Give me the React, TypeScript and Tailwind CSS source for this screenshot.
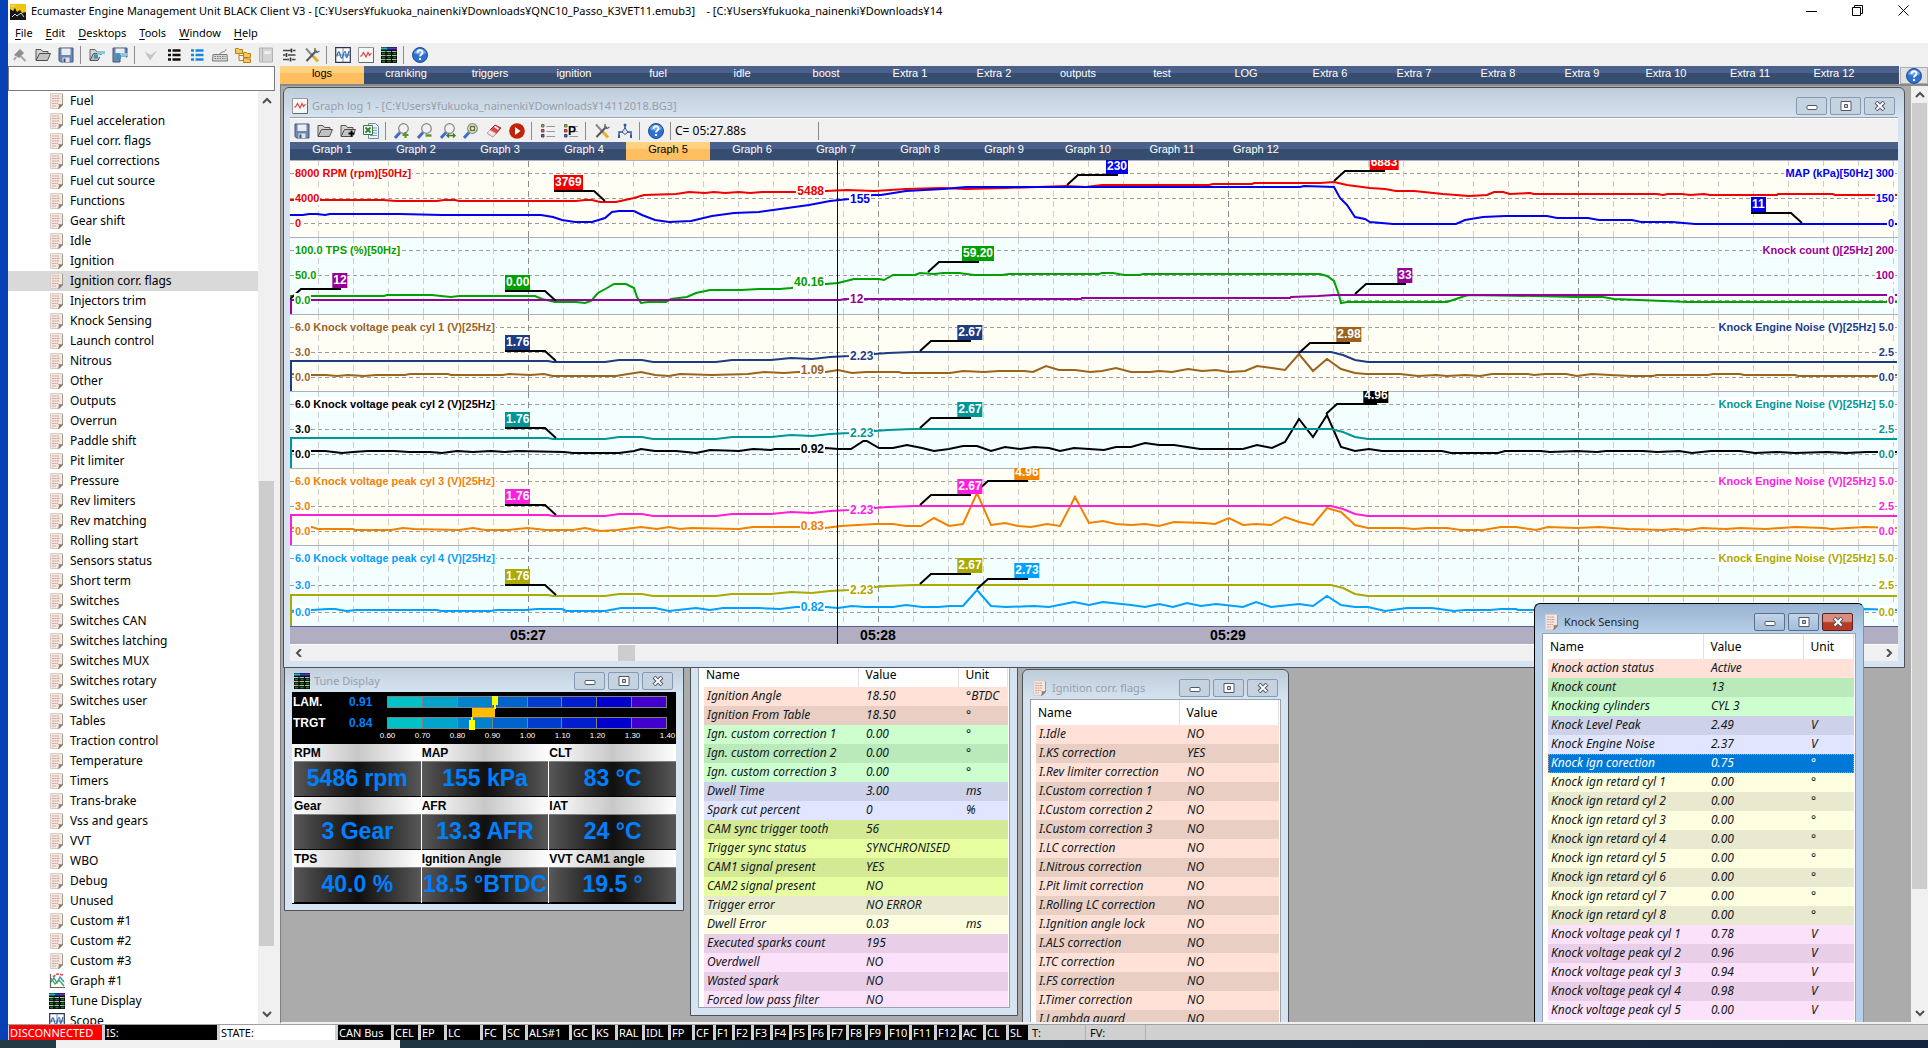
import type { ReactNode } from 'react';
import clsx from 'clsx';

const uiFont = "font-['Noto_Sans','Open_Sans',sans-serif]";
const arial = "font-['Liberation_Sans',Arial,sans-serif]";

/* ---------- icons ---------- */

function Icon({ children }: { children: ReactNode }) {
  return (
    <svg width="16" height="16" viewBox="0 0 16 16" fill="none" aria-hidden="true" className="block shrink-0">
      {children}
    </svg>
  );
}

const PageIcon = () => (
  <Icon>
    <path d="M1.500 0.500h12v11l-4 4h-8z" fill="#efe9e2" stroke="#d5cec6" />
    <path d="M13.500 1v10.500l-4 4" stroke="#a89c90" />
    <path d="M8.500 15.500c1.500-1 1.500-2.500 1-4.500 1.500.5 3 .5 4.500-.5v1.500l-3.500 3.500z" fill="#8f7e6f" />
    <path d="M3 3h7M3 5.500h8M3 8h7M3 10.500h6M3 13h4" stroke="#e39a94" strokeDasharray="2 0.500" />
  </Icon>
);

const SaveIcon = () => (
  <Icon>
    <path d="M1 1h14v14H2.500L1 13.500z" fill="#6d87b0" stroke="#44597c" />
    <path d="M3.500 1.500h9v6.500h-9z" fill="#e9edf3" />
    <path d="M4.500 10.500h7V15h-7z" fill="#dfe5ee" />
    <path d="M5.500 11.500h2V15h-2z" fill="#3d4f6d" />
  </Icon>
);

const FolderIcon = () => (
  <Icon>
    <path d="M1 13V2.500h5l1.500 2H13V7" fill="#d4d4d4" stroke="#555" />
    <path d="M1 13.500L4.500 6.500H15.500L12.500 13.500z" fill="#c2c2c2" stroke="#4d4d4d" />
  </Icon>
);

const FolderAddIcon = () => (
  <Icon>
    <path d="M1 13V2.500h5l1.500 2H13V7" fill="#d4d4d4" stroke="#555" />
    <path d="M1 13.500L4.500 6.500H15.500L12.500 13.500z" fill="#c2c2c2" stroke="#4d4d4d" />
    <path d="M11.500 7.500v6M8.500 10.500h6" stroke="#000" strokeWidth="1.800" />
  </Icon>
);

const DesktopOpenIcon = () => (
  <Icon>
    <path d="M1 13V2.500h5l1.500 2H13V7" fill="#d4d4d4" stroke="#666" />
    <path d="M1 13.500L4.500 6.500h8L9 13.500z" fill="#bbb" stroke="#555" />
    <path d="M8 4h8v3H8z" fill="#8cc7dc" />
    <path d="M5 7.500h4v4H5z" fill="#3b93b5" />
    <path d="M9 9h4" stroke="#dff1f7" strokeWidth="2" />
  </Icon>
);

const DesktopSaveIcon = () => (
  <Icon>
    <path d="M1 1h14v9H8v5H1z" fill="#6d87b0" stroke="#44597c" />
    <path d="M3.500 1.500h9V6h-9z" fill="#e9edf3" />
    <path d="M8 6h8v3H8z" fill="#8cc7dc" />
    <path d="M4 8h5v4H4z" fill="#3b93b5" />
    <path d="M9 10.500h5" stroke="#dff1f7" strokeWidth="2" />
  </Icon>
);

const PlugIcon = () => (
  <Icon>
    <path d="M2 8L8 2l4 4-5 5z" fill="#8f8f8f" />
    <path d="M8.500 9l5 5M4 10l-2 3" stroke="#a5a5a5" strokeWidth="2" />
  </Icon>
);

const CheckIcon = () => (
  <Icon>
    <path d="M1.500 4.500L7 13.500 14.500 3 8 8z" fill="#c4c4c4" />
  </Icon>
);

function ListIcon({ color }: { color: string }) {
  return (
    <Icon>
      <path d="M2 3.500h3M6.500 3.500H14.500M2 8h3M6.500 8H14.500M2 12.500h3M6.500 12.500H14.500" stroke={color} strokeWidth="2.400" />
    </Icon>
  );
}

const KeyboardIcon = () => (
  <Icon>
    <path d="M8 7c0-3 6-1 6-5" stroke="#888" />
    <path d="M1 7.500h14l.5 6.500H.5z" fill="#d8d8d8" stroke="#7a7a7a" />
    <path d="M2.500 9.500h11M2.500 11.500h11" stroke="#777" strokeDasharray="1.500 1" />
  </Icon>
);

const FoldersIcon = () => (
  <Icon>
    <path d="M.5 1.500h3l1 1h3v4h-7zM8.500 5.500h3l1 1h3v4h-7zM8.500 11h3l1 1h3v3.500h-7z" fill="#f9c65c" stroke="#b9811b" />
    <path d="M4 7v6.500h4.500M4 8.500h4.500" stroke="#b9811b" />
  </Icon>
);

const BookIcon = () => (
  <Icon>
    <path d="M1.500 1h13v14h-13z" fill="#d5d5d5" stroke="#b3b3b3" />
    <path d="M4.500 1v14" stroke="#b3b3b3" />
    <path d="M6.500 4h6v3h-6z" fill="#efefef" />
  </Icon>
);

const SlidersIcon = () => (
  <Icon>
    <path d="M2 3.500h8M12 3.500h2.500M2 8h2.500M7 8h7.500M2 12.500h6M11 12.500h3.500" stroke="#444" strokeWidth="1.600" />
    <path d="M10.500 1.500v4M5.500 6v4M9.500 10.500v4" stroke="#333" strokeWidth="1.600" />
  </Icon>
);

const ToolsIcon = () => (
  <Icon>
    <path d="M2 1.500l8 9" stroke="#8a8a8a" strokeWidth="2" />
    <path d="M9.500 9.500l4.500 5" stroke="#e8b028" strokeWidth="3" />
    <path d="M12.500 3.500L2.500 14" stroke="#555" strokeWidth="2" />
    <path d="M11 1v3.500l2 1L15.500 4" stroke="#666" strokeWidth="1.400" />
  </Icon>
);

const ScopeIcon = () => (
  <Icon>
    <path d="M.7.7h14.600v14.600H.7z" fill="#fff" stroke="#2b3350" strokeWidth="1.200" />
    <path d="M8 1v14M1 8h14" stroke="#7683a6" />
    <path d="M2 9.500c1-6 2.500-6 3.200-1.500.8 4 1.800 4 2.800 1 1.500-6 3-6 3 0 .5 3 1.500 1 3-5" stroke="#2a6db8" strokeWidth="1.200" />
  </Icon>
);

const GraphIcon = () => (
  <Icon>
    <path d="M.5.5h15v15H.5z" fill="#f7f7f7" stroke="#9a9a9a" />
    <path d="M15.500 1v14.500H1" stroke="#666" />
    <path d="M2 9h1.500L5.500 5.500 8 10l2-4.500 1.500 3L13.500 6" stroke="#e0474a" strokeWidth="1.200" />
  </Icon>
);

const TuneIcon = () => (
  <Icon>
    <path d="M0 0h16v16H0z" fill="#0a0f0a" />
    <path d="M0 1.500h6" stroke="#22b6c4" strokeWidth="2" />
    <path d="M6 1.500h5" stroke="#2148d8" strokeWidth="2" />
    <path d="M11 1.500h5" stroke="#6e2bc0" strokeWidth="2" />
    <path d="M0 4.500h16M0 8.500h16M0 12.500h16" stroke="#b4bcb4" strokeDasharray="4.500 1" />
    <path d="M1 6.500h14M1 10.500h14M1 14.500h14" stroke="#1d7a2d" strokeWidth="1.500" strokeDasharray="3 2.500" />
  </Icon>
);

const ChartIcon = () => (
  <Icon>
    <path d="M1.500 1v13.500H16" stroke="#666" strokeWidth="1.200" />
    <path d="M2 9l3-4 3 5 3-6 4 5" stroke="#2f8ed0" strokeWidth="1.300" />
    <path d="M2 5l4 6 4-4 5 6" stroke="#3faa3f" strokeWidth="1.300" />
    <path d="M4 4l4-3 7 1" stroke="#e0474a" strokeWidth="1.600" strokeDasharray="3 1" />
  </Icon>
);

const HelpIcon = () => (
  <Icon>
    <circle cx="8" cy="8" r="7.500" fill="#2f71cc" stroke="#1f4f9c" />
    <path d="M2 6a6.500 6.500 0 0112 0C11 8 5 8 2 6z" fill="#6ea4ea" />
    <path d="M5.500 6c0-3.500 5-3.500 5-.5 0 2-2.500 2-2.500 4M8 11v2" stroke="#fff" strokeWidth="1.900" />
  </Icon>
);

const ExcelIcon = () => (
  <Icon>
    <path d="M5.500.5h7l3 3v12h-10z" fill="#eef3fb" stroke="#6f8cb8" />
    <path d="M10 5h4M10 7.500h4M10 10h4M7 12.500h7" stroke="#7e9bc9" />
    <path d="M.5 2.500h9v9h-9z" fill="#f3faf0" stroke="#2d7f33" />
    <path d="M2.500 4.500l5 5M7.500 4.500l-5 5" stroke="#2d7f33" strokeWidth="1.800" />
  </Icon>
);

function ZoomIcon({ children }: { children: ReactNode }) {
  return (
    <Icon>
      <path d="M1 15l5-5.500" stroke="#3f6fc4" strokeWidth="3" />
      <circle cx="9.500" cy="5.500" r="4.800" fill="#f1f1f1" stroke="#858585" strokeWidth="1.200" />
      {children}
    </Icon>
  );
}

const EraserIcon = () => (
  <Icon>
    <path d="M1 10l8-8 6 3-8 9z" fill="#e04848" stroke="#a02d2d" />
    <path d="M1 10l3-3 6 3.500L7 14z" fill="#f2e7e7" stroke="#c9a8a8" />
    <path d="M8.500 3.500l4 2.500" stroke="#fff" strokeWidth="1.500" />
  </Icon>
);

const PlayIcon = () => (
  <Icon>
    <circle cx="8" cy="8" r="7.800" fill="#c22408" />
    <path d="M6 4l5.500 4L6 12z" fill="#fff" />
  </Icon>
);

function LegendIcon({ letter }: { letter?: string }) {
  return (
    <Icon>
      <path d="M6.500 3.500H15M6.500 8.500H15M6.500 13.500H15" stroke="#999" />
      <path d="M1.500 1.500h2.500v2.500h-2.500z" fill="#8ba86c" stroke="#5b7a3b" />
      <path d="M1.500 6.500h2.500v2.500h-2.500z" fill="#d06868" stroke="#9b3333" />
      <path d="M1.500 11.500h2.500v2.500h-2.500z" fill="#5b6fb5" stroke="#33437f" />
      {letter && (
        <text x="5" y="12" fontSize="12" fontWeight="700" fill="#000" fontFamily="Liberation Sans">
          {letter}
        </text>
      )}
    </Icon>
  );
}

const NodesIcon = () => (
  <Icon>
    <path d="M8 2v5M2 13V9h12v4" stroke="#35569a" strokeWidth="1.500" />
    <path d="M8 5l3 4-3 2.500L5 9z" fill="#dfe7f5" stroke="#35569a" />
    <path d="M1 12h2v3H1zM13 12h2v3h-2z" fill="#35569a" />
    <circle cx="8" cy="2" r="1.500" fill="#35569a" />
  </Icon>
);

const AppIcon = () => (
  <Icon>
    <path d="M0 0h16v16H0z" fill="#f2c412" />
    <path d="M0 16V5l3 2 2-3 2 4 3-2 2 3 4-1v8z" fill="#171717" />
    <path d="M2 13l3-3 2 2 4-3 3 4M1 2h4" stroke="#ddd" />
  </Icon>
);

function ToolButton({ label, children }: { label: string; children: ReactNode }) {
  return (
    <button type="button" aria-label={label} className="flex h-[22px] w-[23px] items-center justify-center">
      {children}
    </button>
  );
}

const Divider = () => <span className="mr-[4px] ml-[3px] h-[18px] w-px shrink-0 bg-[#8c8c8c]" />;

/* ---------- windows ---------- */

function WindowButtons({ active = false }: { active?: boolean }) {
  const base = 'flex h-[18px] w-[31px] items-center justify-center rounded-xs border';
  const idle = active
    ? 'border-[#57708f] bg-linear-to-b from-[#c3d4e8] to-[#a3bcd9]'
    : 'border-[#8798b3] bg-[#c5d2e0]';
  return (
    <div className="flex gap-[3px]">
      <button type="button" aria-label="Minimize" className={clsx(base, idle)}>
        <svg width="12" height="10" viewBox="0 0 12 10" aria-hidden="true">
          <rect x="1" y="4.500" width="10" height="4" rx="1" fill="#fff" stroke="#50586a" />
        </svg>
      </button>
      <button type="button" aria-label="Restore" className={clsx(base, idle)}>
        <svg width="12" height="10" viewBox="0 0 12 10" aria-hidden="true">
          <path d="M1 .5h10v9H1zM4.500 3.500v3h3v-3z" fill="#fff" fillRule="evenodd" stroke="#50586a" />
        </svg>
      </button>
      <button
        type="button"
        aria-label="Close"
        className={clsx(base, active ? 'border-[#5f1f1a] bg-linear-to-b from-[#d98b7f] from-45% to-[#b93a26] to-55%' : idle)}
      >
        <svg width="12" height="10" viewBox="0 0 12 10" aria-hidden="true">
          <path d="M2 1l8 8M10 1l-8 8" stroke="#50586a" strokeWidth="4" />
          <path d="M2.500 1.500l7 7M9.500 1.500l-7 7" stroke="#fff" strokeWidth="2" />
        </svg>
      </button>
    </div>
  );
}

interface ChildWindowProps {
  title?: string;
  icon?: ReactNode;
  active?: boolean;
  className: string;
  children: ReactNode;
}

function ChildWindow({ title, icon, active = false, className, children }: ChildWindowProps) {
  return (
    <section
      className={clsx(
        'absolute flex flex-col rounded-t-md border px-[6px] pb-[6px]',
        active
          ? 'border-black border-r-[#2ab4d8] bg-[#b9d1ea] bg-linear-to-b from-[#98b3d1] to-[#b9d1ea] to-[30px]'
          : 'border-[#4d5258] bg-[#d6e3f1] bg-linear-to-b from-[#bfccda] to-[#d6e3f1] to-[30px]',
        className,
      )}
    >
      <header className="flex h-[29px] shrink-0 items-center gap-1 pt-[6px] pr-[3px] pl-[2px]">
        {icon}
        <h2 className={clsx('flex-1 truncate text-[11px] leading-4', active ? 'text-[#1c2733]' : 'text-[#98a0a9]')}>
          {title}
        </h2>
        <WindowButtons active={active} />
      </header>
      {children}
    </section>
  );
}

/* ---------- data tables ---------- */

const tones: Record<string, string[]> = {
  peach: ['bg-[#ffe1d7]', 'bg-[#e9cec4]'],
  green: ['bg-[#ccffcd]', 'bg-[#bae9ba]'],
  blue: ['bg-[#e1e5ff]', 'bg-[#ced2e9]'],
  lime: ['bg-[#e8ffa1]', 'bg-[#d4e993]'],
  yellow: ['bg-[#feffe1]', 'bg-[#e8e9ce]'],
  pink: ['bg-[#fce1fb]', 'bg-[#e8cee6]'],
};

type Row = [tone: string, name: string, value: string, unit?: string];

const ignitionRows: Row[] = [
  ['peach', 'Ignition Angle', '18.50', '°BTDC'],
  ['peach', 'Ignition From Table', '18.50', '°'],
  ['green', 'Ign. custom correction 1', '0.00', '°'],
  ['green', 'Ign. custom correction 2', '0.00', '°'],
  ['green', 'Ign. custom correction 3', '0.00', '°'],
  ['blue', 'Dwell Time', '3.00', 'ms'],
  ['blue', 'Spark cut percent', '0', '%'],
  ['lime', 'CAM sync trigger tooth', '56'],
  ['lime', 'Trigger sync status', 'SYNCHRONISED'],
  ['lime', 'CAM1 signal present', 'YES'],
  ['lime', 'CAM2 signal present', 'NO'],
  ['yellow', 'Trigger error', 'NO ERROR'],
  ['yellow', 'Dwell Error', '0.03', 'ms'],
  ['pink', 'Executed sparks count', '195'],
  ['pink', 'Overdwell', 'NO'],
  ['pink', 'Wasted spark', 'NO'],
  ['pink', 'Forced low pass filter', 'NO'],
];

const flagRows: Row[] = [
  'Idle', 'KS correction', 'Rev limiter correction', 'Custom correction 1', 'Custom correction 2',
  'Custom correction 3', 'LC correction', 'Nitrous correction', 'Pit limit correction',
  'Rolling LC correction', 'Ignition angle lock', 'ALS correction', 'TC correction', 'FS correction',
  'Timer correction', 'Lambda guard',
].map((name) => ['peach', `I.${name}`, name === 'KS correction' ? 'YES' : 'NO']);

const knockRows: Row[] = [
  ['peach', 'Knock action status', 'Active'],
  ['green', 'Knock count', '13'],
  ['green', 'Knocking cylinders', 'CYL 3'],
  ['blue', 'Knock Level Peak', '2.49', 'V'],
  ['blue', 'Knock Engine Noise', '2.37', 'V'],
  ['selected', 'Knock ign corection', '0.75', '°'],
  ...[1, 2, 3, 4, 5, 6, 7, 8].map((n): Row => ['yellow', `Knock ign retard cyl ${n}`, '0.00', '°']),
  ...['0.78', '0.96', '0.94', '0.98', '0.00'].map(
    (v, i): Row => ['pink', `Knock voltage peak cyl ${i + 1}`, v, 'V'],
  ),
];

function DataTable({ rows, nameWidth, units = true }: { rows: Row[]; nameWidth: string; units?: boolean }) {
  return (
    <div className="min-h-0 flex-1 overflow-hidden border border-[#9aa3ad] bg-white pr-px pl-[5px]">
      <table className="w-full table-fixed text-left text-[12px]">
        <thead>
          <tr className="h-[25px]">
            <th className={clsx('border-r border-[#e2e2e2] pl-[2px] font-normal', nameWidth)}>Name</th>
            <th className={clsx('border-r border-[#e2e2e2] pl-[7px] font-normal', units && 'w-[100px]')}>Value</th>
            {units && <th className="border-r border-[#e2e2e2] pl-[7px] font-normal">Unit</th>}
          </tr>
        </thead>
        <tbody className="italic">
          {rows.map(([tone, name, value, unit], i) => (
            <tr
              key={name}
              className={clsx(
                'h-[19px] leading-[18px] whitespace-nowrap',
                tone === 'selected'
                  ? 'bg-[#0078d7] text-white outline-1 -outline-offset-1 outline-[#ff8728] outline-dotted'
                  : ['text-[#101820]', tones[tone][i % 2]],
              )}
            >
              <td className="p-0 pb-px pl-[3px]">{name}</td>
              <td className="p-0 pb-px pl-2">{value}</td>
              {units && <td className="p-0 pb-px pl-2">{unit}</td>}
            </tr>
          ))}
        </tbody>
      </table>
    </div>
  );
}

/* ---------- graph log ---------- */

interface Tag {
  text: string;
  tip: number;
  top: number;
  color: string;
  side: 'left' | 'right';
}

interface Trace {
  color: string;
  points: string;
}

interface PanelData {
  top: number;
  grid: number[];
  height: string;
  left: { color: string; labels: string[]; cursor: string; cursorY: number };
  right: { color: string; labels: string[]; cursor: string; cursorY: number };
  traces: Trace[];
  tags: Tag[];
}

// Traces are recorded on the client raster; the plot area begins at this column.
const PLOT_X = 290;

const noiseShape: [number, number][] = [
  [291, 77], [291, 47], [548, 47], [553, 48], [605, 48], [619, 46], [642, 46], [653, 48], [716, 48],
  [732, 46], [771, 46], [791, 44], [812, 45], [830, 43], [849, 42], [875, 40], [888, 39], [913, 38],
  [1331, 38], [1343, 41], [1355, 46], [1368, 48], [1897, 48],
];

const noise = (top: number, scale = 1) =>
  noiseShape.map(([x, y]) => `${x},${Math.round(top + y * scale)}`).join(' ');

const panels: PanelData[] = [
  {
    top: 160,
    grid: [13, 38, 63],
    height: 'h-[77px]',
    left: { color: '#f00000', labels: ['8000 RPM (rpm)[50Hz]', '4000', '0'], cursor: '5488', cursorY: 191 },
    right: { color: '#0000f0', labels: ['MAP (kPa)[50Hz] 300', '150', '0'], cursor: '155', cursorY: 199 },
    traces: [
      {
        color: '#f00000',
        points:
          '290,200 383,200 396,201 437,201 444,200 455,200 459,201 576,201 585,200 592,200 600,202 616,202 625,200 634,198 644,195 676,194 689,192 705,193 714,192 725,193 739,192 750,193 762,192 794,192 826,191 847,190 874,191 906,189 941,188 966,189 1006,188 1066,186 1086,187 1102,185 1209,185 1213,184 1252,184 1254,183 1320,183 1334,182 1347,185 1370,188 1385,189 1396,191 1414,191 1443,194 1469,196 1487,195 1494,192 1503,192 1510,194 1530,193 1534,194 1657,194 1663,195 1668,194 1682,194 1690,195 1704,194 1710,195 1777,195 1778,194 1833,194 1835,195 1897,195',
      },
      {
        color: '#0000f0',
        points:
          '290,215 303,215 309,214 317,214 325,215 330,214 400,214 442,215 541,215 553,217 562,220 575,222 592,222 605,218 612,212 619,211 634,211 642,215 655,220 669,222 691,221 712,216 734,213 759,212 773,210 809,205 830,201 849,199 873,195 881,195 906,191 943,189 966,187 1300,187 1304,186 1334,187 1340,198 1347,205 1355,217 1365,219 1370,222 1393,224 1456,224 1465,220 1483,217 1505,216 1547,216 1557,218 1588,218 1599,220 1632,220 1641,222 1672,222 1695,224 1897,224',
      },
    ],
    tags: [
      { text: '3769', tip: 605, top: 175, color: '#f00000', side: 'left' },
      { text: '230', tip: 1067, top: 159, color: '#0000f0', side: 'right' },
      { text: '6883', tip: 1334, top: 155, color: '#f00000', side: 'right' },
      { text: '11', tip: 1802, top: 197, color: '#0000f0', side: 'left' },
    ],
  },
  {
    top: 237,
    grid: [13, 38, 63],
    height: 'h-[77px]',
    left: { color: '#00a000', labels: ['100.0 TPS (%)[50Hz]', '50.0', '0.0'], cursor: '40.16', cursorY: 282 },
    right: { color: '#960096', labels: ['Knock count ()[25Hz] 200', '100', '0'], cursor: '12', cursorY: 299 },
    traces: [
      {
        color: '#00a000',
        points:
          '290,296 384,296 387,295 432,295 441,296 451,297 459,296 535,296 542,299 555,302 576,302 585,303 591,301 598,293 607,288 614,284 626,284 634,288 637,297 641,303 648,302 666,302 671,299 687,297 696,293 710,290 741,290 759,289 780,289 791,288 826,284 838,283 854,279 879,279 884,280 893,275 915,275 920,273 934,274 943,273 959,273 974,275 1002,275 1009,274 1099,274 1102,273 1113,273 1124,275 1140,275 1143,274 1320,274 1327,276 1334,281 1339,295 1341,303 1347,302 1447,302 1456,299 1465,296 1469,295 1534,296 1577,297 1603,297 1614,299 1639,300 1688,302 1897,302',
      },
      {
        color: '#960096',
        points: '291,314 291,300 840,300 845,299 1081,299 1082,298 1290,298 1291,297 1318,296 1334,295 1897,295',
      },
    ],
    tags: [
      { text: '12', tip: 290, top: 273, color: '#960096', side: 'right' },
      { text: '0.00', tip: 556, top: 275, color: '#00a000', side: 'left' },
      { text: '59.20', tip: 928, top: 246, color: '#00a000', side: 'right' },
      { text: '33', tip: 1355, top: 268, color: '#960096', side: 'right' },
    ],
  },
  {
    top: 314,
    grid: [13, 38, 63],
    height: 'h-[77px]',
    left: { color: '#9b641e', labels: ['6.0 Knock voltage peak cyl 1 (V)[25Hz]', '3.0', '0.0'], cursor: '1.09', cursorY: 370 },
    right: { color: '#1e3c82', labels: ['Knock Engine Noise (V)[25Hz] 5.0', '2.5', '0.0'], cursor: '2.23', cursorY: 356 },
    traces: [
      {
        color: '#9b641e',
        points:
          '290,374 312,375 326,375 337,376 348,375 364,376 376,375 405,375 410,374 448,374 451,375 503,375 509,374 530,375 544,374 553,376 616,376 628,374 641,372 655,375 669,376 680,374 712,375 748,374 764,372 784,373 798,372 826,372 838,370 852,373 866,372 899,372 902,373 950,373 963,371 984,372 999,371 1024,371 1033,372 1046,366 1059,370 1075,370 1090,372 1102,371 1116,368 1131,372 1150,372 1159,371 1172,372 1188,369 1202,371 1216,370 1229,372 1245,371 1257,366 1272,368 1285,370 1299,354 1313,371 1327,359 1341,369 1355,373 1366,374 1400,374 1418,376 1436,375 1447,376 1465,375 1480,376 1492,374 1528,374 1534,375 1545,374 1566,374 1577,376 1592,374 1610,375 1632,376 1653,376 1657,375 1708,375 1713,374 1740,374 1744,375 1795,375 1798,376 1875,376 1897,375',
      },
      { color: '#1e3c82', points: noise(314) },
    ],
    tags: [
      { text: '1.76', tip: 556, top: 335, color: '#1e3c82', side: 'left' },
      { text: '2.67', tip: 920, top: 325, color: '#1e3c82', side: 'right' },
      { text: '2.98', tip: 1299, top: 327, color: '#9b641e', side: 'right' },
    ],
  },
  {
    top: 391,
    grid: [13, 38, 63],
    height: 'h-[77px]',
    left: { color: '#000000', labels: ['6.0 Knock voltage peak cyl 2 (V)[25Hz]', '3.0', '0.0'], cursor: '0.92', cursorY: 449 },
    right: { color: '#009696', labels: ['Knock Engine Noise (V)[25Hz] 5.0', '2.5', '0.0'], cursor: '2.23', cursorY: 433 },
    traces: [
      {
        color: '#000000',
        points:
          '290,451 325,451 342,453 353,452 368,451 394,451 409,452 430,452 442,453 457,451 473,452 491,451 505,452 517,451 564,452 573,453 619,453 634,451 641,449 655,451 676,451 696,453 710,450 739,451 753,449 771,450 775,449 798,449 826,448 838,449 851,449 865,440 879,448 893,448 907,445 922,448 934,451 949,449 963,446 977,446 991,451 1005,447 1020,449 1034,447 1049,448 1060,451 1074,448 1104,450 1116,447 1131,447 1145,443 1159,445 1174,445 1200,449 1243,449 1257,445 1272,448 1285,442 1299,419 1313,437 1327,415 1341,447 1355,451 1369,449 1382,451 1442,451 1451,453 1498,453 1505,451 1541,451 1550,452 1577,451 1597,452 1606,451 1643,451 1657,452 1679,451 1692,453 1711,451 1740,451 1755,453 1777,452 1795,453 1827,452 1846,453 1867,452 1897,452',
      },
      { color: '#009696', points: noise(391) },
    ],
    tags: [
      { text: '1.76', tip: 556, top: 412, color: '#009696', side: 'left' },
      { text: '2.67', tip: 920, top: 402, color: '#009696', side: 'right' },
      { text: '4.96', tip: 1326, top: 388, color: '#000000', side: 'right' },
    ],
  },
  {
    top: 468,
    grid: [13, 38, 63],
    height: 'h-[77px]',
    left: { color: '#f08200', labels: ['6.0 Knock voltage peak cyl 3 (V)[25Hz]', '3.0', '0.0'], cursor: '0.83', cursorY: 526 },
    right: { color: '#ff1edc', labels: ['Knock Engine Noise (V)[25Hz] 5.0', '2.5', '0.0'], cursor: '2.23', cursorY: 510 },
    traces: [
      {
        color: '#f08200',
        points:
          '290,528 312,527 318,529 353,529 355,530 391,530 403,528 414,529 459,530 473,528 485,530 507,530 517,529 528,528 546,530 573,530 585,528 600,531 617,530 641,527 657,529 669,527 680,529 691,528 739,529 753,527 798,527 825,528 841,526 875,524 893,524 906,526 921,526 934,518 949,526 963,524 977,493 991,525 1005,523 1018,526 1031,527 1047,524 1060,526 1075,497 1089,523 1103,521 1116,524 1131,525 1145,524 1159,526 1174,522 1204,523 1215,524 1229,518 1243,525 1256,524 1271,525 1285,517 1299,522 1313,525 1327,508 1341,512 1355,525 1368,528 1403,528 1414,529 1427,528 1447,528 1461,530 1483,530 1501,527 1516,527 1536,530 1548,527 1577,528 1599,527 1628,529 1663,530 1675,529 1688,530 1702,528 1726,529 1740,528 1766,529 1795,527 1824,528 1831,529 1865,527 1897,528',
      },
      { color: '#ff1edc', points: noise(468) },
    ],
    tags: [
      { text: '1.76', tip: 556, top: 489, color: '#ff1edc', side: 'left' },
      { text: '4.96', tip: 977, top: 465, color: '#f08200', side: 'right' },
      { text: '2.67', tip: 920, top: 479, color: '#ff1edc', side: 'right' },
    ],
  },
  {
    top: 545,
    grid: [13, 40, 67],
    height: 'h-[81px]',
    left: { color: '#00a0ff', labels: ['6.0 Knock voltage peak cyl 4 (V)[25Hz]', '3.0', '0.0'], cursor: '0.82', cursorY: 607 },
    right: { color: '#aaaa00', labels: ['Knock Engine Noise (V)[25Hz] 5.0', '2.5', '0.0'], cursor: '2.23', cursorY: 590 },
    traces: [
      {
        color: '#00a0ff',
        points:
          '290,611 312,610 328,609 335,609 346,611 357,610 437,610 441,611 491,611 496,610 526,610 537,609 562,609 566,611 605,611 621,608 655,608 669,611 696,608 710,610 723,608 759,608 780,609 796,607 826,607 838,608 852,606 865,607 893,607 906,605 922,607 938,607 950,606 963,606 977,590 991,606 1006,607 1034,606 1049,607 1074,602 1089,605 1103,602 1131,605 1145,607 1159,604 1173,607 1187,603 1201,606 1216,604 1243,607 1256,602 1271,607 1299,604 1313,606 1327,596 1341,605 1355,607 1368,607 1385,611 1407,608 1432,608 1454,611 1465,610 1490,610 1501,609 1516,609 1518,610 1850,610 1865,609 1897,610',
      },
      { color: '#aaaa00', points: noise(545, 1.06) },
    ],
    tags: [
      { text: '1.76', tip: 556, top: 569, color: '#aaaa00', side: 'left' },
      { text: '2.67', tip: 920, top: 558, color: '#aaaa00', side: 'right' },
      { text: '2.73', tip: 977, top: 563, color: '#00a0ff', side: 'right' },
    ],
  },
];

const gridColumns = Array.from({ length: 46 }, (_, k) => ({ x: 318 + 35 * k, major: k % 10 === 6 }));

function callout({ tip, top, side }: Tag) {
  const y = top + 16;
  return side === 'left'
    ? `${tip - 51},${y} ${tip - 11},${y} ${tip},${y + 10}`
    : `${tip + 51},${y} ${tip + 11},${y} ${tip},${y + 10}`;
}

function GraphPanel({ panel, odd }: { panel: PanelData; odd: boolean }) {
  const { top, grid, height, left, right, traces, tags } = panel;
  return (
    <div className={clsx('relative overflow-hidden', height, odd ? 'bg-[#f3feff]' : 'bg-[#fffef4]')}>
      <svg className="absolute inset-0 h-full w-full" aria-hidden="true">
        <g shapeRendering="crispEdges">
          {grid.map((y) => (
            <line key={y} x1="0" x2="100%" y1={y + 0.5} y2={y + 0.5} stroke="#9c9c9c" strokeDasharray="4 3" />
          ))}
          {gridColumns.map(({ x, major }) => (
            <line
              key={x}
              x1={x - PLOT_X + 0.5}
              x2={x - PLOT_X + 0.5}
              y1="1"
              y2="100%"
              stroke={major ? '#8c8c8c' : '#cdcdcd'}
              strokeDasharray="6 4"
            />
          ))}
          <line x1="0" x2="100%" y1="0.5" y2="0.5" stroke="#b0aec0" />
        </g>
        <g transform={`translate(${-PLOT_X} ${-top})`} fill="none" strokeWidth="2">
          {traces.map(({ color, points }) => (
            <polyline key={color} points={points} stroke={color} />
          ))}
          {tags.map((tag) => (
            <polyline key={tag.text + tag.tip} points={callout(tag)} stroke="#000" />
          ))}
        </g>
      </svg>
      {grid.map((y, i) => (
        <div
          key={y}
          className="absolute inset-x-0 flex justify-between pr-[3px] pl-1 text-[11px] leading-[14px] font-bold"
          style={{ top: y - 7 }}
        >
          <span className="bg-white px-px" style={{ color: left.color }}>{left.labels[i]}</span>
          <span className="bg-white px-px" style={{ color: right.color }}>{right.labels[i]}</span>
        </div>
      ))}
      <span
        className="absolute left-[501px] flex w-[34px] justify-end text-[12px] leading-[14px] font-bold"
        style={{ top: left.cursorY - top - 7, color: left.color }}
      >
        <span className="bg-white px-px">{left.cursor}</span>
      </span>
      <span
        className="absolute left-[559px] bg-white px-px text-[12px] leading-[14px] font-bold"
        style={{ top: right.cursorY - top - 7, color: right.color }}
      >
        {right.cursor}
      </span>
      {tags.map((tag) => (
        <span
          key={tag.text + tag.tip}
          className={clsx(
            'absolute px-px text-[12px] leading-[15px] font-bold text-white',
            tag.side === 'right' && '-translate-x-1/2',
          )}
          style={{
            left: tag.tip - PLOT_X + (tag.side === 'left' ? -51 : 50),
            top: tag.top - top,
            backgroundColor: tag.color,
          }}
        >
          {tag.text}
        </span>
      ))}
    </div>
  );
}

function TabStrip({ tabs, active }: { tabs: string[]; active: string }) {
  return (
    <div
      role="tablist"
      className={clsx('flex h-[18px] flex-1 overflow-hidden bg-linear-to-b from-[#4b618c] from-40% to-[#364d70] to-40% text-[11px]', arial)}
    >
      {tabs.map((tab) => (
        <button
          key={tab}
          type="button"
          role="tab"
          aria-selected={tab === active}
          className={clsx(
            'h-[18px] w-[84px] shrink-0 pb-1 leading-[14px]',
            tab === active ? 'bg-linear-to-b from-[#ffd280] from-40% to-[#ffbe60] to-40% text-black' : 'text-white',
          )}
        >
          {tab}
        </button>
      ))}
    </div>
  );
}

const graphTabs = Array.from({ length: 12 }, (_, i) => `Graph ${i + 1}`);

function GraphLog() {
  return (
    <ChildWindow
      title="Graph log 1 - [C:¥Users¥fukuoka_nainenki¥Downloads¥14112018.BG3]"
      icon={<GraphIcon />}
      className="top-px right-[6px] left-[2px] z-10"
    >
      <div className="border-t border-[#9aa3ad]">
        <div className="flex h-6 items-center border-t border-white bg-[#f0f0f0]">
          <ToolButton label="Save log"><SaveIcon /></ToolButton>
          <ToolButton label="Open log"><FolderIcon /></ToolButton>
          <ToolButton label="Append log"><FolderAddIcon /></ToolButton>
          <ToolButton label="Export to Excel"><ExcelIcon /></ToolButton>
          <Divider />
          <ToolButton label="Zoom in">
            <ZoomIcon><path d="M11.500 9v6M8.500 12h6" stroke="#5f9427" strokeWidth="2.200" /></ZoomIcon>
          </ToolButton>
          <ToolButton label="Zoom out">
            <ZoomIcon><path d="M8.500 12.500h6" stroke="#5f9427" strokeWidth="2.400" /></ZoomIcon>
          </ToolButton>
          <ToolButton label="Zoom width">
            <ZoomIcon><path d="M7.500 12.500h7M9 10.500l-2 2 2 2M13 10.500l2 2-2 2" stroke="#4c7a1c" strokeWidth="1.500" /></ZoomIcon>
          </ToolButton>
          <ToolButton label="Zoom to fit">
            <ZoomIcon><path d="M7.500 3.500h4v4h-4z" stroke="#5f7a1c" strokeWidth="1.500" /></ZoomIcon>
          </ToolButton>
          <ToolButton label="Clear log"><EraserIcon /></ToolButton>
          <ToolButton label="Play"><PlayIcon /></ToolButton>
          <Divider />
          <ToolButton label="Legend"><LegendIcon /></ToolButton>
          <ToolButton label="Parameters"><LegendIcon letter="P" /></ToolButton>
          <Divider />
          <ToolButton label="Options"><ToolsIcon /></ToolButton>
          <ToolButton label="Statistics"><NodesIcon /></ToolButton>
          <Divider />
          <ToolButton label="Help"><HelpIcon /></ToolButton>
          <Divider />
          <output className="w-[140px] text-[12px]">C= 05:27.88s</output>
          <Divider />
        </div>
      </div>
      <div className="flex">
        <TabStrip tabs={graphTabs} active="Graph 5" />
      </div>
      <div className={clsx('relative', arial)}>
        {panels.map((panel, i) => (
          <GraphPanel key={panel.top} panel={panel} odd={i % 2 === 1} />
        ))}
        <div className="relative h-[18px] overflow-hidden border-t border-[#5a5aa0] bg-[#b0aec0] text-[14px] leading-[17px] font-bold">
          {['05:27', '05:28', '05:29'].map((time, i) => (
            <span key={time} className="absolute top-0 -translate-x-1/2" style={{ left: 238 + i * 350 }}>
              {time}
            </span>
          ))}
        </div>
        <div className="absolute inset-y-0 left-[547px] w-px bg-[#000080]" />
      </div>
      <div className="flex h-[17px] items-center border-t border-white bg-[#f0f0f0] px-1">
        <button type="button" aria-label="Scroll left"><Chevron dir="left" /></button>
        <div className="flex-[314]" />
        <div className="h-4 w-[17px] bg-[#cdcdcd]" />
        <div className="flex-[1248]" />
        <button type="button" aria-label="Scroll right"><Chevron dir="right" /></button>
      </div>
    </ChildWindow>
  );
}

const chevrons = { up: 'M1 6l4-4 4 4', down: 'M1 2l4 4 4-4', left: 'M7 0L3 4l4 4', right: 'M3 0l4 4-4 4' };

function Chevron({ dir }: { dir: keyof typeof chevrons }) {
  return (
    <svg width="10" height="8" viewBox="0 0 10 8" fill="none" className="block" aria-hidden="true">
      <path d={chevrons[dir]} stroke="#505050" strokeWidth="2" />
    </svg>
  );
}

/* ---------- tune display ---------- */

const lambdaColors = [
  'bg-[#00c3c8]', 'bg-[#00a5cd]', 'bg-[#0082cd]', 'bg-[#0064cd]',
  'bg-[#003ccd]', 'bg-[#001ecd]', 'bg-[#0000cd]', 'bg-[#4100cd]',
];

const gauges = [
  ['RPM', '5486 rpm'], ['MAP', '155 kPa'], ['CLT', '83 °C'],
  ['Gear', '3 Gear'], ['AFR', '13.3 AFR'], ['IAT', '24 °C'],
  ['TPS', '40.0 %'], ['Ignition Angle', '18.5 °BTDC'], ['VVT CAM1 angle', '19.5 °'],
];

function LambdaBar({ name, value }: { name: string; value: string }) {
  return (
    <div className="flex h-3 items-center text-[12px] leading-4 font-bold">
      <span className="w-14 text-white">{name}</span>
      <span className="w-[38px] text-[#0080ff]">{value}</span>
      <div className="flex h-3 w-[280px] gap-px border border-[#808080] bg-[#808080]">
        {lambdaColors.map((color) => (
          <span key={color} className={clsx('flex-1', color)} />
        ))}
      </div>
    </div>
  );
}

function TuneDisplay() {
  return (
    <ChildWindow title="Tune Display" icon={<TuneIcon />} className="top-[576px] left-[3px] h-[249px] w-[400px] pr-[7px]! pl-[7px]!">
      <div className={clsx('min-h-0 flex-1 overflow-hidden bg-black', arial)}>
        <div className="relative flex h-[52px] flex-col pt-1 pl-px">
          <LambdaBar name="LAM." value="0.91" />
          <div className="h-[9px]" />
          <LambdaBar name="TRGT" value="0.84" />
          <div className="ml-[77px] flex text-center text-[8px] leading-[14px] text-white">
            {['0.60', '0.70', '0.80', '0.90', '1.00', '1.10', '1.20', '1.30', '1.40'].map((v) => (
              <span key={v} className="w-[35px] shrink-0">{v}</span>
            ))}
          </div>
          {/* deviation between measured and target lambda */}
          <span className="absolute top-4 left-[180px] h-[9px] w-[23px] bg-[#ffbe00]" />
          <span className="absolute top-1 left-[200px] h-[9px] w-[6px] bg-[#ffff00]" />
          <span className="absolute top-[13px] left-[202px] h-1 w-[2px] bg-[#ffff00]" />
          <span className="absolute top-[28px] left-[177px] h-[10px] w-[6px] bg-[#ffff00]" />
          <span className="absolute top-[25px] left-[179px] h-1 w-[2px] bg-[#ffff00]" />
        </div>
        <dl className="grid grid-cols-3 gap-x-px bg-white pl-[2px] font-bold">
          {gauges.map(([name, value]) => (
            <div key={name} className="h-[53px] overflow-hidden whitespace-nowrap">
              <dt className="h-[17px] bg-linear-to-r from-white via-[#c8c8c8] to-white text-[12px] leading-[19px]">{name}</dt>
              <dd className="h-[35px] border-t border-[#808080] bg-linear-to-r from-[#585858] via-[#101010] to-[#585858] text-center text-[23px] leading-[33px] text-[#0080ff]">
                {value}
              </dd>
              <div className="h-px bg-black" />
            </div>
          ))}
        </dl>
      </div>
    </ChildWindow>
  );
}

/* ---------- side tree ---------- */

const treeItems = [
  'Fuel', 'Fuel acceleration', 'Fuel corr. flags', 'Fuel corrections', 'Fuel cut source', 'Functions',
  'Gear shift', 'Idle', 'Ignition', 'Ignition corr. flags', 'Injectors trim', 'Knock Sensing',
  'Launch control', 'Nitrous', 'Other', 'Outputs', 'Overrun', 'Paddle shift', 'Pit limiter', 'Pressure',
  'Rev limiters', 'Rev matching', 'Rolling start', 'Sensors status', 'Short term', 'Switches',
  'Switches CAN', 'Switches latching', 'Switches MUX', 'Switches rotary', 'Switches user', 'Tables',
  'Traction control', 'Temperature', 'Timers', 'Trans-brake', 'Vss and gears', 'VVT', 'WBO', 'Debug',
  'Unused', 'Custom #1', 'Custom #2', 'Custom #3', 'Graph #1', 'Tune Display', 'Scope',
];

const treeIcons: Record<string, ReactNode> = {
  'Graph #1': <ChartIcon />,
  'Tune Display': <TuneIcon />,
  Scope: <ScopeIcon />,
};

function SideTree() {
  return (
    <aside className="flex w-[267px] shrink-0 flex-col bg-white">
      <input type="text" aria-label="Search parameters" className="h-[25px] w-full border border-[#7a7a7a] bg-white px-1 text-[12px] outline-none" />
      <div className="flex min-h-0 flex-1 overflow-hidden">
        <ul className="min-w-0 flex-1 overflow-hidden text-[12px]">
          {treeItems.map((item) => (
            <li key={item}>
              <button
                type="button"
                className={clsx(
                  'flex h-5 w-full items-center gap-[5px] pl-[41px] text-left',
                  item === 'Ignition corr. flags' && 'bg-[#d9d9d9]',
                )}
              >
                {treeIcons[item] ?? <PageIcon />}
                {item}
              </button>
            </li>
          ))}
        </ul>
        <div className="flex w-[17px] flex-col items-center bg-[#f0f0f0] py-[6px]">
          <button type="button" aria-label="Scroll up"><Chevron dir="up" /></button>
          <div className="min-h-0 flex-[376]" />
          <div className="min-h-0 w-[15px] flex-[465] bg-[#cdcdcd]" />
          <div className="min-h-0 flex-[64]" />
          <button type="button" aria-label="Scroll down"><Chevron dir="down" /></button>
        </div>
      </div>
    </aside>
  );
}

/* ---------- status bar ---------- */

const flags: [string, string][] = [
  ['CAN Bus', 'w-[53px]'], ['CEL', 'w-[24px]'], ['EP', 'w-[23px]'], ['LC', 'w-[33px]'], ['FC', 'w-[20px]'],
  ['SC', 'w-[19px]'], ['ALS#1', 'w-[41px]'], ['GC', 'w-[20px]'], ['KS', 'w-[20px]'], ['RAL', 'w-[24px]'],
  ['IDL', 'w-[23px]'], ['FP', 'w-[21px]'], ['CF', 'w-[18px]'], ['F1', 'w-[16px]'], ['F2', 'w-[16px]'],
  ['F3', 'w-[16px]'], ['F4', 'w-[16px]'], ['F5', 'w-[16px]'], ['F6', 'w-[16px]'], ['F7', 'w-[16px]'],
  ['F8', 'w-[16px]'], ['F9', 'w-[17px]'], ['F10', 'w-[21px]'], ['F11', 'w-[22px]'], ['F12', 'w-[22px]'],
  ['AC', 'w-[21px]'], ['CL', 'w-[20px]'], ['SL', 'w-[19px]'],
];

function StatusBar() {
  const cell = 'h-[15px] shrink-0 overflow-hidden whitespace-nowrap pl-px';
  return (
    <footer className="flex h-4 shrink-0 gap-[3px] border-t border-[#a0a0a0] bg-[#d0d0d0] pl-px text-[11px] leading-[15px] text-white">
      <span className={clsx(cell, 'w-[93px] bg-[#ff0000]')}>DISCONNECTED</span>
      <span className={clsx(cell, 'w-[112px] bg-black')}>IS:</span>
      <span className={clsx(cell, 'w-[115px] bg-white text-black')}>STATE:</span>
      {flags.map(([flag, width]) => (
        <span key={flag} className={clsx(cell, width, 'bg-black')}>{flag}</span>
      ))}
      <span className={clsx(cell, 'w-[55px] border-r border-[#b0b0b0] text-black')}>T:</span>
      <span className={clsx(cell, 'w-[57px] border-r border-[#b0b0b0] text-black')}>FV:</span>
    </footer>
  );
}

/* ---------- main frame ---------- */

const desktops = [
  'logs', 'cranking', 'triggers', 'ignition', 'fuel', 'idle', 'boost', 'Extra 1', 'Extra 2', 'outputs',
  'test', 'LOG', 'Extra 6', 'Extra 7', 'Extra 8', 'Extra 9', 'Extra 10', 'Extra 11', 'Extra 12',
];

const menus = ['File', 'Edit', 'Desktops', 'Tools', 'Window', 'Help'];

function TitleBar() {
  return (
    <header className="flex h-[23px] shrink-0 items-center gap-[5px] bg-white pl-[2px]">
      <AppIcon />
      <h1 className="flex-1 truncate text-[11px] whitespace-pre">
        {'Ecumaster Engine Management Unit BLACK Client V3 - [C:¥Users¥fukuoka_nainenki¥Downloads¥QNC10_Passo_K3VET11.emub3]    - [C:¥Users¥fukuoka_nainenki¥Downloads¥14'}
      </h1>
      <div className="flex self-start pr-[2px]">
        <button type="button" aria-label="Minimize" className="flex h-5 w-[46px] items-center justify-center">
          <svg width="11" height="11" aria-hidden="true"><path d="M0 6.500h11" stroke="#000" /></svg>
        </button>
        <button type="button" aria-label="Restore" className="flex h-5 w-[46px] items-center justify-center">
          <svg width="11" height="11" fill="none" aria-hidden="true"><path d="M.5 2.500h8v8h-8zM2.500 2.500v-2h8v8h-2" stroke="#000" /></svg>
        </button>
        <button type="button" aria-label="Close" className="flex h-5 w-[46px] items-center justify-center">
          <svg width="11" height="11" fill="none" aria-hidden="true"><path d="M.5.5l10 10M10.500.5l-10 10" stroke="#000" /></svg>
        </button>
      </div>
    </header>
  );
}

function MainToolbar() {
  return (
    <div className="flex h-[23px] shrink-0 items-center bg-[#f0f0f0]">
      <ToolButton label="Connect"><PlugIcon /></ToolButton>
      <ToolButton label="Open project"><FolderIcon /></ToolButton>
      <ToolButton label="Save project"><SaveIcon /></ToolButton>
      <Divider />
      <ToolButton label="Open desktop"><DesktopOpenIcon /></ToolButton>
      <ToolButton label="Save desktop"><DesktopSaveIcon /></ToolButton>
      <Divider />
      <ToolButton label="Apply"><CheckIcon /></ToolButton>
      <ToolButton label="Parameters"><ListIcon color="#111" /></ToolButton>
      <ToolButton label="Log channels"><ListIcon color="#1687dc" /></ToolButton>
      <ToolButton label="Shortcuts"><KeyboardIcon /></ToolButton>
      <ToolButton label="Project tree"><FoldersIcon /></ToolButton>
      <ToolButton label="Notes"><BookIcon /></ToolButton>
      <ToolButton label="Sliders"><SlidersIcon /></ToolButton>
      <ToolButton label="Options"><ToolsIcon /></ToolButton>
      <Divider />
      <ToolButton label="Scope"><ScopeIcon /></ToolButton>
      <ToolButton label="Graph log"><GraphIcon /></ToolButton>
      <ToolButton label="Tune display"><TuneIcon /></ToolButton>
      <Divider />
      <ToolButton label="Help"><HelpIcon /></ToolButton>
    </div>
  );
}

function Workspace() {
  return (
    <main className="flex min-w-0 flex-1 flex-col">
      <div className="flex h-[18px] shrink-0">
        <TabStrip tabs={desktops} active="logs" />
        <button type="button" aria-label="Help" className="mt-px ml-px flex h-[17px] w-7 items-center justify-center border border-[#adadad] bg-[#e1e1e1]">
          <HelpIcon />
        </button>
      </div>
      <div className="flex min-h-0 flex-1 border-t-2 border-b-2 border-l border-t-[#8a8a8a] border-b-[#f0f0f0] border-l-[#808080]">
        <div className="relative min-w-0 flex-1 overflow-hidden bg-[#ababab]">
          <ChildWindow className="top-[545px] left-[409px] h-[385px] w-[328px] pr-[7px]! pb-[7px]! pl-[7px]!">
            <DataTable rows={ignitionRows} nameWidth="w-[154px]" />
          </ChildWindow>
          <ChildWindow title="Ignition corr. flags" icon={<PageIcon />} className="top-[583px] left-[741px] h-[400px] w-[267px] pr-[7px]! pl-[7px]!">
            <DataTable rows={flagRows} nameWidth="w-[143px]" units={false} />
          </ChildWindow>
          <TuneDisplay />
          <GraphLog />
          <ChildWindow active title="Knock Sensing" icon={<PageIcon />} className="top-[517px] left-[1253px] z-20 h-[480px] w-[330px] pr-[7px]! pl-[7px]!">
            <DataTable rows={knockRows} nameWidth="w-[155px]" />
          </ChildWindow>
        </div>
        <div className="flex w-[17px] shrink-0 flex-col items-center bg-[#f0f0f0] py-[5px]">
          <button type="button" aria-label="Scroll up"><Chevron dir="up" /></button>
          <div className="h-1" />
          <div className="min-h-0 w-[15px] flex-[786] bg-[#cdcdcd]" />
          <div className="min-h-0 flex-[120]" />
          <button type="button" aria-label="Scroll down"><Chevron dir="down" /></button>
        </div>
      </div>
    </main>
  );
}

function App() {
  return (
    <div className={clsx('flex h-screen flex-col overflow-hidden bg-[#f0f0f0] text-black', uiFont)}>
      <div className="flex min-h-0 flex-1">
        <div className="w-2 shrink-0 bg-[#0540b4]" />
        <div className="flex min-w-0 flex-1 flex-col">
          <TitleBar />
          <nav className="flex h-5 shrink-0 items-center gap-[13px] bg-white pl-[7px] text-[11px]">
            {menus.map((menu) => (
              <button key={menu} type="button">
                <span className="underline underline-offset-2">{menu[0]}</span>
                {menu.slice(1)}
              </button>
            ))}
          </nav>
          <MainToolbar />
          <div className="flex min-h-0 flex-1 gap-[5px]">
            <SideTree />
            <Workspace />
          </div>
          <StatusBar />
        </div>
      </div>
      <div className="flex h-2 shrink-0 bg-linear-to-r from-[#223b44] to-[#14233d] pl-14">
        <div className="w-[344px] bg-[#f0f0f0]" />
      </div>
    </div>
  );
}

export default App;
